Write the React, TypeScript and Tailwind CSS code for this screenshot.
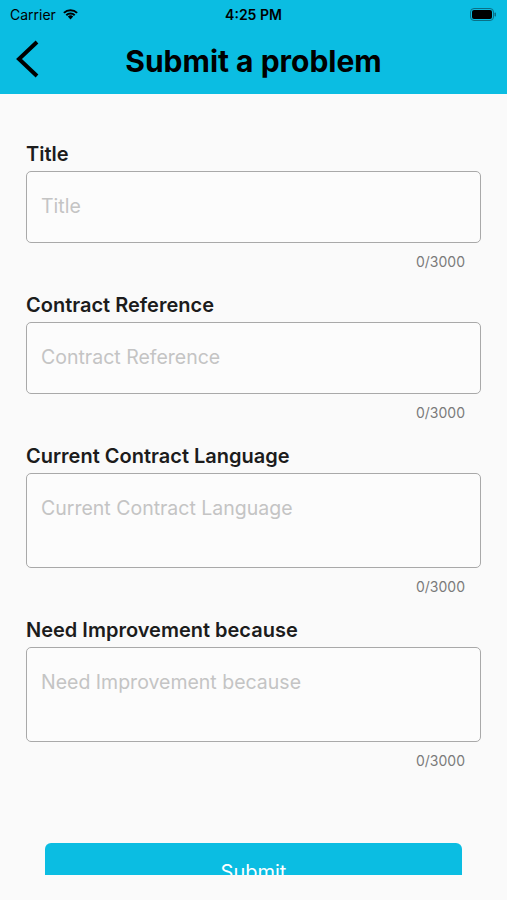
const fields = [
  { label: "Title", multiline: false },
  { label: "Contract Reference", multiline: false },
  { label: "Current Contract Language", multiline: true },
  { label: "Need Improvement because", multiline: true },
];

const StatusBar = () => (
  <div className="flex h-[28px] items-center justify-between px-[10px] text-[14px] text-black">
    <div className="flex w-[120px] items-center gap-[6px]">
      <span>Carrier</span>
      <svg width="17" height="12" viewBox="0 0 17 12">
        <path d="M8.5 11.5 L5.8 8.6 a3.9 3.9 0 0 1 5.4 0 Z" fill="#000" />
        <path d="M3.6 6.6 a7 7 0 0 1 9.8 0 l-1.4 1.4 a5 5 0 0 0 -7 0 Z" fill="#000" />
        <path d="M1.2 4.2 a10.4 10.4 0 0 1 14.6 0 l-1.4 1.4 a8.4 8.4 0 0 0 -11.8 0 Z" fill="#000" />
      </svg>
    </div>
    <span className="font-semibold">4:25 PM</span>
    <div className="flex w-[120px] justify-end">
      <svg width="27" height="13" viewBox="0 0 27 13">
        <rect x="0.5" y="0.5" width="23" height="12" rx="3.5" fill="none" stroke="#0a6f86" />
        <rect x="2" y="2" width="20" height="9" rx="2" fill="#000" />
        <rect x="24.5" y="4.5" width="1.5" height="4" rx="0.7" fill="#0a6f86" />
      </svg>
    </div>
  </div>
);

export default function App() {
  return (
    <div className="flex h-[900px] w-[507px] flex-col overflow-hidden bg-[#fafafa] font-['Inter',sans-serif]">
      <div className="bg-[#0bbde2]">
        <StatusBar />
        <div className="relative flex h-[66px] items-center justify-center">
          <svg className="absolute left-[14px] top-[11px]" width="28" height="40" viewBox="0 0 28 40">
            <path d="M23 3 L5 20 L23 37" fill="none" stroke="#000" strokeWidth="4" />
          </svg>
          <h1 className="text-[30px] font-bold leading-[36px] text-black">Submit a problem</h1>
        </div>
      </div>
      <div className="flex h-[781px] flex-col overflow-hidden">
        <div className="flex flex-col px-[26px] pt-[49px]">
          {fields.map((f) => (
            <div key={f.label} className="mb-[23px] flex flex-col">
              <label className="mb-[6px] h-[22px] text-[20px] font-semibold leading-[22px] text-[#1c1c1c]">
                {f.label}
              </label>
              <div
                className={`rounded-[5px] border border-[#a9a9a9] bg-[#fcfcfc] px-[14px] pt-[22px] ${
                  f.multiline ? "h-[95px]" : "h-[72px]"
                }`}
              >
                <span className="text-[19.5px] leading-[24px] text-[#c4c4c4]">{f.label}</span>
              </div>
              <div className="mt-[10px] h-[18px] pr-[16px] text-right text-[14px] leading-[18px] text-[#7a7a7a]">
                0/3000
              </div>
            </div>
          ))}
        </div>
        <div className="mx-[45px] mt-[50px] flex h-[60px] shrink-0 items-start justify-center rounded-[6px] bg-[#0bbde2]">
          <span className="pt-[17px] text-[20px] leading-[24px] text-white">Submit</span>
        </div>
      </div>
    </div>
  );
}
